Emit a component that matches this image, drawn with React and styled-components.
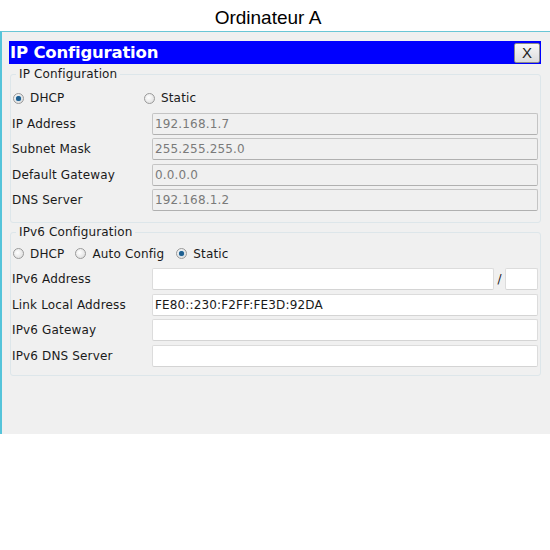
import React from "react";
import styled, { createGlobalStyle } from "styled-components";

const GlobalStyle = createGlobalStyle`
  html, body {
    margin: 0;
    padding: 0;
    background: #ffffff;
  }
  * {
    box-sizing: border-box;
  }
`;

const Page = styled.div`
  width: 550px;
  height: 550px;
  overflow: hidden;
  background: #ffffff;
`;

const Heading = styled.div`
  height: 31px;
  display: flex;
  align-items: center;
  justify-content: center;
  font-family: "Liberation Sans", Arial, sans-serif;
  font-size: 19px;
  color: #000;
  padding: 4px 14px 0 0;
`;

const Window = styled.div`
  height: 403px;
  background: #f0f0f0;
  border-top: 1px solid #6ac6d6;
  border-left: 2px solid #55c4da;
  padding: 9px 9px 0 7px;
  font-family: "DejaVu Sans", Verdana, sans-serif;
  font-size: 12px;
  letter-spacing: 0.15px;
  color: #1a1a1a;
`;

const TitleBar = styled.div`
  height: 23px;
  background: #0000ff;
  display: flex;
  align-items: center;
  justify-content: space-between;
  padding: 0 1px 0 1px;
`;

const Title = styled.span`
  color: #ffffff;
  font-family: "DejaVu Sans", Tahoma, sans-serif;
  font-weight: bold;
  font-size: 16.5px;
  letter-spacing: -0.2px;
`;

const CloseButton = styled.button`
  width: 26px;
  height: 20px;
  padding: 0;
  border: 1px solid #8a8a8a;
  border-radius: 2px;
  background: linear-gradient(#f8f8f8, #dcdcdc);
  font-family: "Liberation Sans", Arial, sans-serif;
  font-size: 15px;
  color: #222;
  display: flex;
  align-items: center;
  justify-content: center;
`;

const Group = styled.fieldset`
  margin: ${(p) => p.$top}px 0 0 1px;
  padding: 0 2px ${(p) => p.$bottom}px 1px;
  border: 1px solid #dde6ea;
  border-radius: 3px;
  min-width: 0;
`;

const Legend = styled.legend`
  padding: 0 3px;
  margin-left: 4px;
  font-size: 12px;
  color: #1a1a1a;
`;

const RadioRow = styled.div`
  height: ${(p) => p.$height}px;
  display: flex;
  align-items: center;
  padding-top: ${(p) => p.$pad}px;
  padding-left: 1px;
`;

const RadioItem = styled.label`
  display: flex;
  align-items: center;
  gap: 6px;
  width: ${(p) => (p.$width ? `${p.$width}px` : "auto")};
  margin-right: ${(p) => p.$gap || 0}px;
`;

const RadioCircle = styled.span`
  width: 11px;
  height: 11px;
  border-radius: 50%;
  border: 1px solid #9a9a9a;
  background: radial-gradient(circle at 40% 40%, #ffffff, #d8d8d8);
  display: flex;
  align-items: center;
  justify-content: center;

  &::after {
    content: "";
    width: 5px;
    height: 5px;
    border-radius: 50%;
    background: ${(p) => (p.$checked ? "#1f5f8f" : "transparent")};
    box-shadow: ${(p) => (p.$checked ? "0 0 1px #2c86c2" : "none")};
  }
`;

const FieldRow = styled.div`
  height: ${(p) => p.$pitch}px;
  display: flex;
  align-items: center;
`;

const Label = styled.span`
  width: 140px;
  flex-shrink: 0;
`;

const Input = styled.div`
  flex: ${(p) => (p.$fixed ? "0 0 33px" : "1")};
  height: 22px;
  border: 1px solid ${(p) => (p.$disabled ? "#c4c4c4" : "#dcdcdc")};
  border-bottom-color: ${(p) => (p.$disabled ? "#b0b0b0" : "#d4d4d4")};
  border-radius: 2px;
  background: ${(p) => (p.$disabled ? "#f0f0f0" : "#ffffff")};
  color: ${(p) => (p.$disabled ? "#7a7a7a" : "#1a1a1a")};
  display: flex;
  align-items: center;
  padding-left: 2px;
  white-space: nowrap;
`;

const Slash = styled.span`
  width: 11px;
  text-align: center;
`;

const Radio = ({ label, checked, width, gap }) => (
  <RadioItem $width={width} $gap={gap}>
    <RadioCircle $checked={checked} />
    {label}
  </RadioItem>
);

const ipv4 = [
  ["IP Address", "192.168.1.7"],
  ["Subnet Mask", "255.255.255.0"],
  ["Default Gateway", "0.0.0.0"],
  ["DNS Server", "192.168.1.2"],
];

export default function App() {
  return (
    <Page>
      <GlobalStyle />
      <Heading>Ordinateur A</Heading>
      <Window>
        <TitleBar>
          <Title>IP Configuration</Title>
          <CloseButton>X</CloseButton>
        </TitleBar>
        <Group $top={3} $bottom={9}>
          <Legend>IP Configuration</Legend>
          <RadioRow $height={30} $pad={4}>
            <Radio label="DHCP" checked width={131} />
            <Radio label="Static" />
          </RadioRow>
          {ipv4.map(([label, value]) => (
            <FieldRow key={label} $pitch={25.5}>
              <Label>{label}</Label>
              <Input $disabled>{value}</Input>
            </FieldRow>
          ))}
        </Group>
        <Group $top={2} $bottom={6}>
          <Legend>IPv6 Configuration</Legend>
          <RadioRow $height={27} $pad={2}>
            <Radio label="DHCP" gap={11} />
            <Radio label="Auto Config" gap={12} />
            <Radio label="Static" checked />
          </RadioRow>
          <FieldRow $pitch={25.7}>
            <Label>IPv6 Address</Label>
            <Input />
            <Slash>/</Slash>
            <Input $fixed />
          </FieldRow>
          <FieldRow $pitch={25.7}>
            <Label>Link Local Address</Label>
            <Input>FE80::230:F2FF:FE3D:92DA</Input>
          </FieldRow>
          <FieldRow $pitch={25.7}>
            <Label>IPv6 Gateway</Label>
            <Input />
          </FieldRow>
          <FieldRow $pitch={25.7}>
            <Label>IPv6 DNS Server</Label>
            <Input />
          </FieldRow>
        </Group>
      </Window>
    </Page>
  );
}
